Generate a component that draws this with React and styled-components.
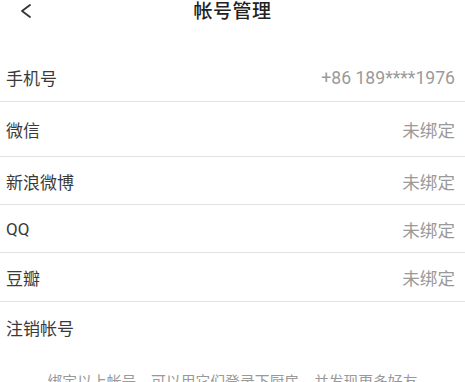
import styled, { createGlobalStyle } from 'styled-components';

const GlobalStyle = createGlobalStyle`
  html, body {
    margin: 0;
    padding: 0;
    background: #fff;
  }
  body {
    font-family: Roboto, "Noto Sans CJK SC", sans-serif;
    color: #333;
    overflow: hidden;
  }
`;

const Page = styled.div`
  width: 465px;
  height: 382px;
  overflow: hidden;
  background: #fff;
`;

const Header = styled.header`
  position: relative;
  height: 24px;
  display: flex;
  align-items: center;
  justify-content: center;
  margin-bottom: 29px;
`;

const BackButton = styled.button`
  position: absolute;
  left: 16px;
  top: 0;
  width: 20px;
  height: 22px;
  padding: 0;
  border: 0;
  background: none;
  display: flex;
  align-items: center;
  justify-content: center;
`;

const Title = styled.h1`
  margin: 0;
  font-size: 19px;
  font-weight: 500;
  line-height: 22px;
  color: #222;
  letter-spacing: 0.5px;
`;

const List = styled.ul`
  list-style: none;
  margin: 0;
  padding: 0;
`;

const Row = styled.li`
  height: ${(p) => p.$h}px;
  display: flex;
  align-items: center;
  justify-content: space-between;
  padding: 1px 10px 0 6px;
  box-sizing: border-box;
  border-bottom: ${(p) => (p.$last ? 'none' : '1px solid #e2e2e2')};
`;

const Label = styled.span`
  font-size: 17px;
  color: #3a3a3a;
`;

const Value = styled.span`
  font-size: 17.6px;
  color: #9a9a9a;
`;

const Note = styled.p`
  margin: 19px 0 0;
  text-align: center;
  font-size: 14.8px;
  color: #999;
`;

const rows = [
  { label: '手机号', value: '+86 189****1976', h: 49 },
  { label: '微信', value: '未绑定', h: 55 },
  { label: '新浪微博', value: '未绑定', h: 48 },
  { label: 'QQ', value: '未绑定', h: 48 },
  { label: '豆瓣', value: '未绑定', h: 49 },
];

export default function App() {
  return (
    <Page>
      <GlobalStyle />
      <Header>
        <BackButton aria-label="返回">
          <svg width="14" height="16" viewBox="0 0 14 16" fill="none">
            <polyline
              points="11,2 3,8 11,14"
              stroke="#333"
              strokeWidth="1.8"
              strokeLinecap="round"
              strokeLinejoin="round"
            />
          </svg>
        </BackButton>
        <Title>帐号管理</Title>
      </Header>
      <List>
        {rows.map((r) => (
          <Row key={r.label} $h={r.h}>
            <Label>{r.label}</Label>
            <Value>{r.value}</Value>
          </Row>
        ))}
        <Row $h={49} $last>
          <Label>注销帐号</Label>
        </Row>
      </List>
      <Note>绑定以上帐号，可以用它们登录下厨房，并发现更多好友</Note>
    </Page>
  );
}
